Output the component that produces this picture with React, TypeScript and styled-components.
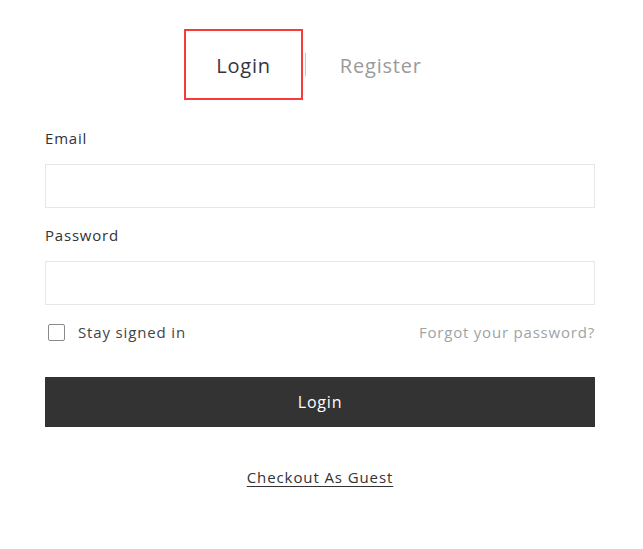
import React from "react";
import styled, { createGlobalStyle } from "styled-components";

const Global = createGlobalStyle`
  html, body { margin: 0; padding: 0; background: #fff; }
  body { font-family: "Open Sans", "Liberation Sans", sans-serif; color: #333; }
  * { box-sizing: border-box; }
`;

const Page = styled.div`
  width: 643px;
  padding: 29px 48px 0 45px;
`;

const Tabs = styled.div`
  display: flex;
  justify-content: center;
  align-items: center;
  margin-left: -2px;
`;

const Tab = styled.div<{ $active?: boolean }>`
  height: 71px;
  padding: 1px 30px 0;
  display: flex;
  align-items: center;
  font-size: 20px;
  letter-spacing: 0.8px;
  border: 2px solid ${(p) => (p.$active ? "#f43c3c" : "transparent")};
  color: ${(p) => (p.$active ? "#34343f" : "#9a9a9a")};
`;

const Divider = styled.div`
  width: 1px;
  height: 23px;
  background: #c8c8c8;
  margin: 0 2px;
`;

const Form = styled.form`
  display: flex;
  flex-direction: column;
  margin-top: 26px;
`;

const Label = styled.label`
  font-size: 15px;
  line-height: 24px;
  color: #333;
  letter-spacing: 0.8px;
`;

const Input = styled.input`
  margin-top: 14px;
  height: 44px;
  width: 100%;
  border: 1px solid #e6e6e6;
  outline: none;
  padding: 0 12px;
  font: inherit;
`;

const Field = styled.div`
  display: flex;
  flex-direction: column;
  & + & { margin-top: 15px; }
`;

const Options = styled.div`
  display: flex;
  justify-content: space-between;
  align-items: center;
  margin-top: 17px;
  height: 20px;
`;

const Check = styled.label`
  display: flex;
  align-items: center;
  gap: 13px;
  font-size: 15px;
  color: #444;
  letter-spacing: 0.85px;
  padding-left: 3px;
`;

const Box = styled.span`
  width: 17px;
  height: 17px;
  border: 1px solid #8a8a8a;
  border-radius: 2px;
  background: #fff;
`;

const Forgot = styled.a`
  font-size: 15px;
  color: #9ea3a8;
  letter-spacing: 0.8px;
  text-decoration: none;
`;

const Submit = styled.button`
  margin-top: 35px;
  height: 50px;
  width: 100%;
  border: none;
  background: #333333;
  color: #fff;
  font: inherit;
  font-size: 16px;
  letter-spacing: 0.8px;
`;

const Guest = styled.a`
  align-self: center;
  margin-top: 40px;
  font-size: 15px;
  color: #333;
  text-decoration: underline;
  text-underline-offset: 3px;
  letter-spacing: 0.9px;
`;

export default function App() {
  return (
    <>
      <Global />
      <Page>
        <Tabs>
          <Tab $active>Login</Tab>
          <Divider />
          <Tab>Register</Tab>
        </Tabs>
        <Form onSubmit={(e) => e.preventDefault()}>
          <Field>
            <Label>Email</Label>
            <Input type="email" />
          </Field>
          <Field>
            <Label>Password</Label>
            <Input type="password" />
          </Field>
          <Options>
            <Check>
              <Box />
              Stay signed in
            </Check>
            <Forgot href="#">Forgot your password?</Forgot>
          </Options>
          <Submit type="submit">Login</Submit>
          <Guest href="#">Checkout As Guest</Guest>
        </Form>
      </Page>
    </>
  );
}
